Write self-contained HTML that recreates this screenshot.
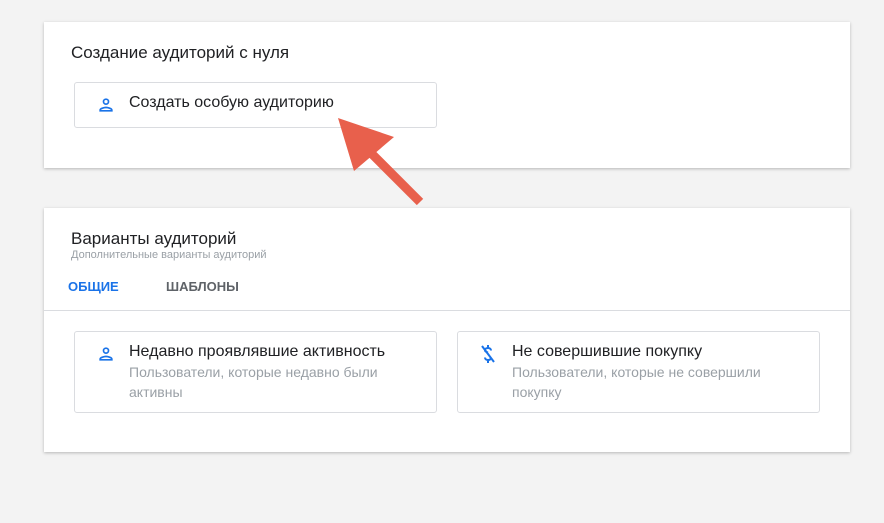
<!DOCTYPE html>
<html><head><meta charset="utf-8"><style>
body{margin:0;width:884px;height:523px;background:#f3f3f3;font-family:"Liberation Sans",Roboto,sans-serif;position:relative;overflow:hidden}
.card{position:absolute;left:44px;width:806px;background:#fff;box-shadow:0 1px 3px rgba(0,0,0,.25)}
.box{position:absolute;border:1px solid #dadce0;border-radius:3px;background:#fff}
.t{position:absolute;font-size:16px;color:#202124}
.s{position:absolute;font-size:14px;color:#9aa0a6;line-height:20px}
svg.i{position:absolute}
</style></head><body>
<div class="card" style="top:22px;height:146px">
 <div class="t" style="left:27px;top:21px;font-size:17px">Создание аудиторий с нуля</div>
 <div class="box" style="left:30px;top:60px;width:361px;height:44px">
  <svg class="i" style="left:21px;top:12px" width="20" height="20" viewBox="0 0 24 24"><path fill="#1a73e8" d="M12 6a2 2 0 1 1 0 4 2 2 0 0 1 0-4m0 10c2.7 0 5.8 1.3 6 2H6c.2-.7 3.3-2 6-2m0-12a4 4 0 1 0 0 8 4 4 0 0 0 0-8zm0 10c-2.7 0-8 1.3-8 4v2h16v-2c0-2.7-5.3-4-8-4z"/></svg>
  <div class="t" style="left:54px;top:11px">Создать особую аудиторию</div>
 </div>
</div>
<div class="card" style="top:208px;height:244px">
 <div class="t" style="left:27px;top:21px;font-size:17px">Варианты аудиторий</div>
 <div style="position:absolute;left:27px;top:41px;font-size:11px;color:#9aa0a6">Дополнительные варианты аудиторий</div>
 <div style="position:absolute;left:24px;top:71px;font-size:13px;color:#1a73e8;font-weight:bold">ОБЩИЕ</div>
 <div style="position:absolute;left:122px;top:71px;font-size:13px;color:#5f6368;font-weight:bold">ШАБЛОНЫ</div>
 <div style="position:absolute;left:0;right:0;top:102px;height:1px;background:#dadce0"></div>
 <div class="box" style="left:30px;top:123px;width:361px;height:80px">
  <svg class="i" style="left:21px;top:12px" width="20" height="20" viewBox="0 0 24 24"><path fill="#1a73e8" d="M12 6a2 2 0 1 1 0 4 2 2 0 0 1 0-4m0 10c2.7 0 5.8 1.3 6 2H6c.2-.7 3.3-2 6-2m0-12a4 4 0 1 0 0 8 4 4 0 0 0 0-8zm0 10c-2.7 0-8 1.3-8 4v2h16v-2c0-2.7-5.3-4-8-4z"/></svg>
  <div class="t" style="left:54px;top:11px">Недавно проявлявшие активность</div>
  <div class="s" style="left:54px;top:30px;width:290px">Пользователи, которые недавно были активны</div>
 </div>
 <div class="box" style="left:413px;top:123px;width:361px;height:80px">
  <svg class="i" style="left:20px;top:11px" width="20" height="22" viewBox="0 0 20 22"><g stroke="#1a73e8" stroke-width="2" fill="none"><path d="M13 7.5c0-1.5-1.3-2.5-3-2.5s-3 .8-3 2.2c0 1.3 1.2 1.8 3 2.3M7 14.5c0 1.5 1.3 2.5 3 2.5s3-.8 3-2.2"/><path d="M10 2v3M10 17v3M4 3l12 16"/></g></svg>
  <div class="t" style="left:54px;top:11px">Не совершившие покупку</div>
  <div class="s" style="left:54px;top:30px;width:290px">Пользователи, которые не совершили покупку</div>
 </div>
</div>
<svg style="position:absolute;left:0;top:0" width="884" height="523"><line x1="420" y1="202" x2="368" y2="150" stroke="#e8604c" stroke-width="9"/><polygon points="338,118 394,137 354,171" fill="#e8604c"/></svg>
</body></html>
